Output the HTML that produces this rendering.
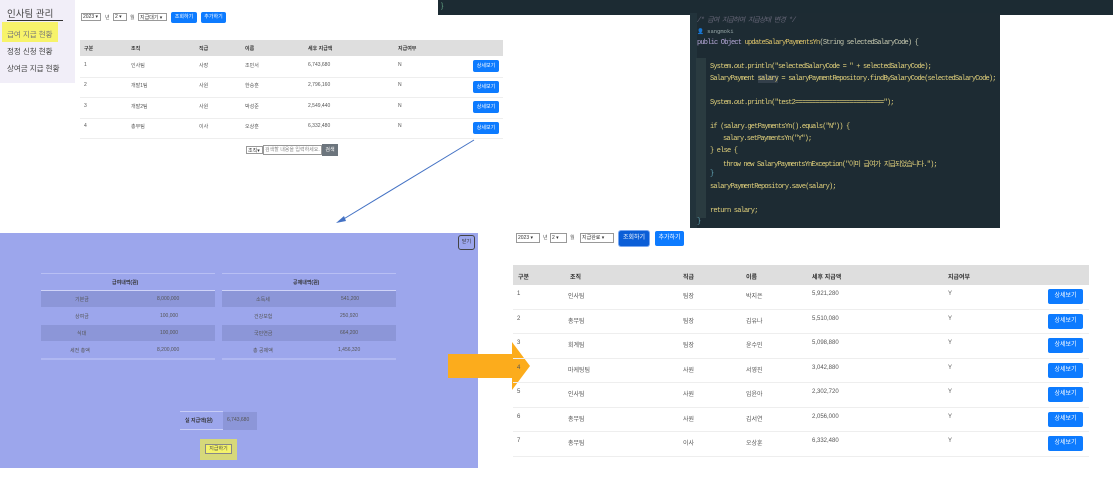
<!DOCTYPE html>
<html><head><meta charset="utf-8"><style>
*{margin:0;padding:0;box-sizing:border-box}
body{width:1113px;height:484px;position:relative;overflow:hidden;background:#fff;font-family:"Liberation Sans","Noto Sans CJK KR",sans-serif;color:#333}
.a{position:absolute;white-space:nowrap}
.s{font-size:5px;color:#555}
.btn{position:absolute;background:#0d7bff;color:#fff;border-radius:2px;text-align:center}
.sel{position:absolute;border:1px solid #999;background:#fff;font-size:5px;padding-left:1px;color:#333}
.code{font-family:"Liberation Mono","Noto Sans CJK KR",monospace;font-size:7px;letter-spacing:-0.8px;color:#c6c9b0}
</style></head><body>
<div class="a" style="left:0;top:0;width:75px;height:83px;background:#f1eef8"></div>
<div class="a" style="left:7px;top:6px;font-size:9.5px;color:#444">인사팀 관리</div>
<div class="a" style="left:7px;top:20px;width:56px;height:1px;background:#333"></div>
<div class="a" style="left:2px;top:22px;width:56px;height:20px;background:#f7f36a"></div>
<div class="a" style="left:7px;top:29px;font-size:7.5px;color:#777">급여 지급 현황</div>
<div class="a" style="left:7px;top:46px;font-size:7.5px;color:#444">정정 신청 현황</div>
<div class="a" style="left:7px;top:63px;font-size:7.5px;color:#444">상여금 지급 현황</div>

<div class="a" style="left:438px;top:0;width:675px;height:15px;background:#1c2b33"></div>
<div class="a" style="left:441px;top:3px;font-size:7px;color:#6a8">}</div>

<div class="sel" style="left:81px;top:13px;width:20px;height:8px">2023 ▾</div>
<div class="a s" style="left:105px;top:14px">년</div>
<div class="sel" style="left:113px;top:13px;width:14px;height:8px">2 ▾</div>
<div class="a s" style="left:130px;top:14px">월</div>
<div class="sel" style="left:138px;top:13px;width:29px;height:8px">지급대기 ▾</div>
<div class="btn" style="left:171px;top:12px;width:26px;height:11px;font-size:5px;line-height:11px">조회하기</div>
<div class="btn" style="left:201px;top:12px;width:25px;height:11px;font-size:5px;line-height:11px">추가하기</div>

<div class="a" style="left:80px;top:40px;width:423px;height:16px;background:#dedede"></div>
<div class="a s" style="left:84px;top:45px;font-weight:bold;color:#333">구분</div>
<div class="a s" style="left:131px;top:45px;font-weight:bold;color:#333">조직</div>
<div class="a s" style="left:199px;top:45px;font-weight:bold;color:#333">직급</div>
<div class="a s" style="left:245px;top:45px;font-weight:bold;color:#333">이름</div>
<div class="a s" style="left:308px;top:45px;font-weight:bold;color:#333">세후 지급액</div>
<div class="a s" style="left:398px;top:45px;font-weight:bold;color:#333">지급여부</div>

<div class="a" style="left:80px;top:77px;width:423px;height:1px;background:#eee"></div>
<div class="a" style="left:80px;top:97px;width:423px;height:1px;background:#eee"></div>
<div class="a" style="left:80px;top:118px;width:423px;height:1px;background:#eee"></div>
<div class="a" style="left:80px;top:138px;width:423px;height:1px;background:#eee"></div>

<div class="a s" style="left:84px;top:62px">1</div><div class="a s" style="left:131px;top:62px">인사팀</div><div class="a s" style="left:199px;top:62px">사장</div><div class="a s" style="left:245px;top:62px">조민서</div><div class="a s" style="left:308px;top:62px">6,743,680</div><div class="a s" style="left:398px;top:62px">N</div>
<div class="btn" style="left:473px;top:60px;width:26px;height:12px;font-size:5px;line-height:12px">상세보기</div>
<div class="a s" style="left:84px;top:82px">2</div><div class="a s" style="left:131px;top:82px">개발1팀</div><div class="a s" style="left:199px;top:82px">사원</div><div class="a s" style="left:245px;top:82px">한승훈</div><div class="a s" style="left:308px;top:82px">2,796,160</div><div class="a s" style="left:398px;top:82px">N</div>
<div class="btn" style="left:473px;top:81px;width:26px;height:12px;font-size:5px;line-height:12px">상세보기</div>
<div class="a s" style="left:84px;top:103px">3</div><div class="a s" style="left:131px;top:103px">개발2팀</div><div class="a s" style="left:199px;top:103px">사원</div><div class="a s" style="left:245px;top:103px">박성준</div><div class="a s" style="left:308px;top:103px">2,549,440</div><div class="a s" style="left:398px;top:103px">N</div>
<div class="btn" style="left:473px;top:101px;width:26px;height:12px;font-size:5px;line-height:12px">상세보기</div>
<div class="a s" style="left:84px;top:123px">4</div><div class="a s" style="left:131px;top:123px">총무팀</div><div class="a s" style="left:199px;top:123px">이사</div><div class="a s" style="left:245px;top:123px">오상훈</div><div class="a s" style="left:308px;top:123px">6,332,480</div><div class="a s" style="left:398px;top:123px">N</div>
<div class="btn" style="left:473px;top:122px;width:26px;height:12px;font-size:5px;line-height:12px">상세보기</div>

<div class="sel" style="left:246px;top:146px;width:17px;height:8px">조직▾</div>
<div class="sel" style="left:263px;top:145px;width:59px;height:10px;color:#888;line-height:8px">검색할 내용을 입력하세요.</div>
<div class="a" style="left:322px;top:144px;width:16px;height:12px;background:#6c757d;color:#fff;font-size:5px;text-align:center;line-height:12px">검색</div>

<svg class="a" style="left:0;top:0" width="1113" height="484"><line x1="474" y1="140" x2="342" y2="220" stroke="#4472c4" stroke-width="1"/><polygon points="336,223 344,216 346,221" fill="#4472c4"/></svg>

<div class="a" style="left:690px;top:13px;width:310px;height:215px;background:#1d2b33;overflow:hidden">
<div class="a" style="left:0;top:0;width:7px;height:215px;background:#22333b"></div>
<div class="a" style="left:6px;top:45px;width:10px;height:160px;background:#2a3b40"></div>
<div class="a code" style="left:7px;top:2px;color:#667;font-style:italic">/* 급여 지급하여 지급상태 변경 */</div>
<div class="a code" style="left:7px;top:15px;font-size:5.5px;letter-spacing:0;color:#9aa">👤 sangmoki</div>
<div class="a code" style="left:7px;top:26px"><span style="color:#b6a8d8">public Object</span> <span style="color:#e3c86c">updateSalaryPaymentsYn</span>(String selectedSalaryCode) {</div>
<div class="a code" style="left:20px;top:50px;color:#e3d27c">System.<i>out</i>.println("selectedSalaryCode = " + selectedSalaryCode);</div>
<div class="a code" style="left:20px;top:62px;color:#e3d27c">SalaryPayment <span style="background:#333f4a">salary</span> = salaryPaymentRepository.findBySalaryCode(selectedSalaryCode);</div>
<div class="a code" style="left:20px;top:86px;color:#e3d27c">System.<i>out</i>.println("test2==========================");</div>
<div class="a code" style="left:20px;top:110px;color:#e3d27c">if (salary.getPaymentsYn().equals("N")) {</div>
<div class="a code" style="left:33px;top:122px;color:#e3d27c">salary.setPaymentsYn("Y");</div>
<div class="a code" style="left:20px;top:134px;color:#e3d27c">} else {</div>
<div class="a code" style="left:33px;top:146px;color:#e3d27c">throw new SalaryPaymentsYnException("이미 급여가 지급되었습니다.");</div>
<div class="a code" style="left:20px;top:157px;color:#6ab">}</div>
<div class="a code" style="left:20px;top:170px;color:#e3d27c">salaryPaymentRepository.save(salary);</div>
<div class="a code" style="left:20px;top:194px;color:#e3d27c">return salary;</div>
<div class="a code" style="left:7px;top:205px;color:#6ab">}</div>
</div>

<div class="a" style="left:0;top:233px;width:478px;height:235px;background:#9ca6ec"></div>
<div class="a" style="left:458px;top:235px;width:17px;height:15px;border:1px solid #444;border-radius:3px;font-size:5px;text-align:center;line-height:13px;color:#333">닫기</div>

<div class="a" style="left:41px;top:273px;width:174px;height:1px;background:#b8bff4"></div>
<div class="a" style="left:41px;top:290px;width:174px;height:1px;background:#d0d4f8"></div>
<div class="a" style="left:41px;top:291px;width:174px;height:16px;background:#8c96d8"></div>
<div class="a" style="left:41px;top:325px;width:174px;height:16px;background:#8c96d8"></div>
<div class="a" style="left:41px;top:358px;width:174px;height:2px;background:#b0b8f2"></div>
<div class="a s" style="left:112px;top:279px;font-weight:bold;color:#333">급여내역(원)</div>
<div class="a s" style="left:75px;top:296px">기본금</div><div class="a s" style="left:157px;top:296px">8,000,000</div>
<div class="a s" style="left:75px;top:313px">상여금</div><div class="a s" style="left:160px;top:313px">100,000</div>
<div class="a s" style="left:77px;top:330px">식대</div><div class="a s" style="left:160px;top:330px">100,000</div>
<div class="a s" style="left:70px;top:347px">세전 총액</div><div class="a s" style="left:157px;top:347px">8,200,000</div>

<div class="a" style="left:222px;top:273px;width:174px;height:1px;background:#b8bff4"></div>
<div class="a" style="left:222px;top:290px;width:174px;height:1px;background:#d0d4f8"></div>
<div class="a" style="left:222px;top:291px;width:174px;height:16px;background:#8c96d8"></div>
<div class="a" style="left:222px;top:325px;width:174px;height:16px;background:#8c96d8"></div>
<div class="a" style="left:222px;top:358px;width:174px;height:2px;background:#b0b8f2"></div>
<div class="a s" style="left:293px;top:279px;font-weight:bold;color:#333">공제내역(원)</div>
<div class="a s" style="left:256px;top:296px">소득세</div><div class="a s" style="left:341px;top:296px">541,200</div>
<div class="a s" style="left:254px;top:313px">건강보험</div><div class="a s" style="left:340px;top:313px">250,920</div>
<div class="a s" style="left:254px;top:330px">국민연금</div><div class="a s" style="left:340px;top:330px">664,200</div>
<div class="a s" style="left:253px;top:347px">총 공제액</div><div class="a s" style="left:338px;top:347px">1,456,320</div>

<div class="a" style="left:180px;top:411px;width:43px;height:19px;border-top:1px solid #c8cdf6;border-bottom:1px solid #c8cdf6"></div>
<div class="a" style="left:223px;top:412px;width:34px;height:18px;background:#8c96d8"></div>
<div class="a s" style="left:185px;top:417px;font-weight:bold;color:#333">실 지급액(원)</div>
<div class="a s" style="left:227px;top:417px">6,743,680</div>
<div class="a" style="left:200px;top:439px;width:37px;height:21px;background:#d6d87a"></div>
<div class="a" style="left:205px;top:444px;width:27px;height:10px;background:#f4f36a;border:1px solid #888;font-size:5px;text-align:center;line-height:8px;color:#444">지급하기</div>

<svg class="a" style="left:0;top:0" width="1113" height="484"><polygon points="448,354 512,354 512,342 530,366 512,390 512,378 448,378" fill="#fcac1c"/></svg>

<div class="sel" style="left:516px;top:233px;width:24px;height:10px;line-height:8px">2023 ▾</div>
<div class="a s" style="left:543px;top:234px">년</div>
<div class="sel" style="left:550px;top:233px;width:17px;height:10px;line-height:8px">2 ▾</div>
<div class="a s" style="left:570px;top:234px">월</div>
<div class="sel" style="left:580px;top:233px;width:34px;height:10px;line-height:8px">지급완료 ▾</div>
<div class="btn" style="left:619px;top:231px;width:30px;height:15px;font-size:6px;line-height:15px;background:#0b5ed7;box-shadow:0 0 0 1px #7aa8f0">조회하기</div>
<div class="btn" style="left:655px;top:231px;width:29px;height:15px;font-size:6px;line-height:15px">추가하기</div>

<div class="a" style="left:513px;top:265px;width:576px;height:20px;background:#dedede"></div>
<div class="a s" style="left:518px;top:272px;font-weight:bold;color:#333;font-size:6px">구분</div>
<div class="a s" style="left:570px;top:272px;font-weight:bold;color:#333;font-size:6px">조직</div>
<div class="a s" style="left:683px;top:272px;font-weight:bold;color:#333;font-size:6px">직급</div>
<div class="a s" style="left:746px;top:272px;font-weight:bold;color:#333;font-size:6px">이름</div>
<div class="a s" style="left:812px;top:272px;font-weight:bold;color:#333;font-size:6px">세후 지급액</div>
<div class="a s" style="left:948px;top:272px;font-weight:bold;color:#333;font-size:6px">지급여부</div>

<div style="position:absolute;left:513px;top:285px;width:576px;font-size:6px;color:#555">
<div style="position:relative;height:24.5px;border-bottom:1px solid #eee"><span class="a" style="left:4px;top:6px">1</span><span class="a" style="left:55px;top:6px">인사팀</span><span class="a" style="left:170px;top:6px">팀장</span><span class="a" style="left:233px;top:6px">박지은</span><span class="a" style="left:299px;top:6px">5,921,280</span><span class="a" style="left:435px;top:6px">Y</span><span class="btn" style="left:535px;top:4px;width:35px;height:15px;line-height:15px">상세보기</span></div>
<div style="position:relative;height:24.5px;border-bottom:1px solid #eee"><span class="a" style="left:4px;top:6px">2</span><span class="a" style="left:55px;top:6px">총무팀</span><span class="a" style="left:170px;top:6px">팀장</span><span class="a" style="left:233px;top:6px">김유나</span><span class="a" style="left:299px;top:6px">5,510,080</span><span class="a" style="left:435px;top:6px">Y</span><span class="btn" style="left:535px;top:4px;width:35px;height:15px;line-height:15px">상세보기</span></div>
<div style="position:relative;height:24.5px;border-bottom:1px solid #eee"><span class="a" style="left:4px;top:6px">3</span><span class="a" style="left:55px;top:6px">회계팀</span><span class="a" style="left:170px;top:6px">팀장</span><span class="a" style="left:233px;top:6px">윤수민</span><span class="a" style="left:299px;top:6px">5,098,880</span><span class="a" style="left:435px;top:6px">Y</span><span class="btn" style="left:535px;top:4px;width:35px;height:15px;line-height:15px">상세보기</span></div>
<div style="position:relative;height:24.5px;border-bottom:1px solid #eee"><span class="a" style="left:4px;top:6px">4</span><span class="a" style="left:55px;top:6px">마케팅팀</span><span class="a" style="left:170px;top:6px">사원</span><span class="a" style="left:233px;top:6px">서영진</span><span class="a" style="left:299px;top:6px">3,042,880</span><span class="a" style="left:435px;top:6px">Y</span><span class="btn" style="left:535px;top:4px;width:35px;height:15px;line-height:15px">상세보기</span></div>
<div style="position:relative;height:24.5px;border-bottom:1px solid #eee"><span class="a" style="left:4px;top:6px">5</span><span class="a" style="left:55px;top:6px">인사팀</span><span class="a" style="left:170px;top:6px">사원</span><span class="a" style="left:233px;top:6px">임윤아</span><span class="a" style="left:299px;top:6px">2,302,720</span><span class="a" style="left:435px;top:6px">Y</span><span class="btn" style="left:535px;top:4px;width:35px;height:15px;line-height:15px">상세보기</span></div>
<div style="position:relative;height:24.5px;border-bottom:1px solid #eee"><span class="a" style="left:4px;top:6px">6</span><span class="a" style="left:55px;top:6px">총무팀</span><span class="a" style="left:170px;top:6px">사원</span><span class="a" style="left:233px;top:6px">김서연</span><span class="a" style="left:299px;top:6px">2,056,000</span><span class="a" style="left:435px;top:6px">Y</span><span class="btn" style="left:535px;top:4px;width:35px;height:15px;line-height:15px">상세보기</span></div>
<div style="position:relative;height:24.5px;border-bottom:1px solid #eee"><span class="a" style="left:4px;top:6px">7</span><span class="a" style="left:55px;top:6px">총무팀</span><span class="a" style="left:170px;top:6px">이사</span><span class="a" style="left:233px;top:6px">오상훈</span><span class="a" style="left:299px;top:6px">6,332,480</span><span class="a" style="left:435px;top:6px">Y</span><span class="btn" style="left:535px;top:4px;width:35px;height:15px;line-height:15px">상세보기</span></div>
</div>
</body></html>
